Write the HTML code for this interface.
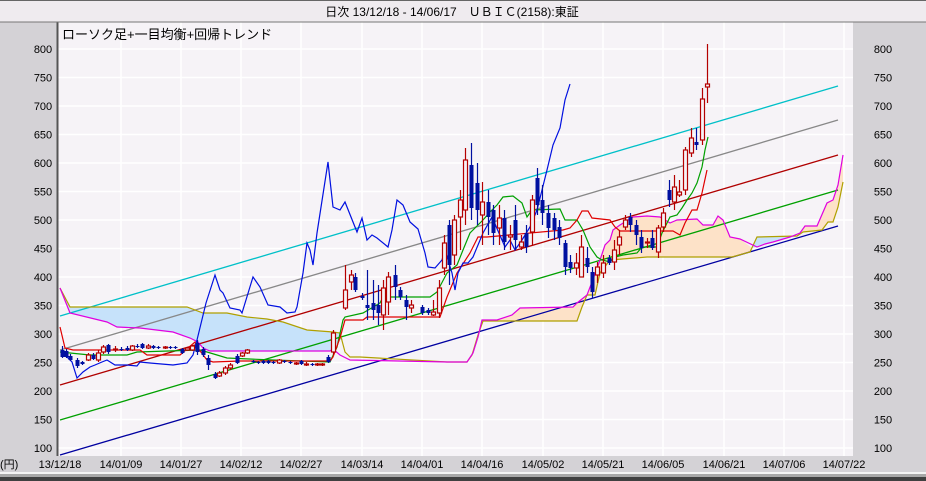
<!DOCTYPE html>
<html><head><meta charset="utf-8"><style>
html,body{margin:0;padding:0;width:926px;height:481px;overflow:hidden;background:#d4d2d6}
svg{display:block}
text{font-family:"Liberation Sans","Noto Sans CJK JP",sans-serif}
</style></head><body>
<svg id="s" width="926" height="481" viewBox="0 0 926 481" xmlns="http://www.w3.org/2000/svg">
<rect x="0" y="0" width="926" height="481" fill="#d4d2d6"/>
<rect x="58" y="22" width="795" height="434" fill="#f6f3f7"/>
<g stroke="#ffffff" stroke-width="1.5" fill="none">
<path d="M58 49H853M58 77.5H853M58 106H853M58 134.5H853M58 163H853M58 191.5H853M58 220H853M58 248.5H853M58 277H853M58 305.5H853M58 334H853M58 362.5H853M58 391H853M58 419.5H853M58 448H853"/>
<path d="M121 22V456M181 22V456M241 22V456M301 22V456M362 22V456M422 22V456M482 22V456M543 22V456M603 22V456M663 22V456M724 22V456M784 22V456M844 22V456"/>
</g>
<line x1="57.5" y1="22" x2="57.5" y2="456" stroke="#555" stroke-width="2"/>
<polygon fill="#c6e2fa" points="60,288 70,307 187,307 203,313 227,313 247,317 267,319 283,322 307,330 333,332 340,333 343,340 340,340 333,349 330,351 210,351 203,348 198,342 190,338 173,332 140,328 117,327 107,322 70,313"/>
<polygon fill="#fde2c8" points="467,362 473,353 478,337 482,320 497,320 512,315 520,308 573,307 577,303 587,295 592,282 600,260 605,245 610,240 613,230 620,225 633,217 647,216 660,217 670,223 677,220 697,219 703,225 713,225 718,216 723,220 730,237 740,239 752,248 750,252 732,257 650,257 647,257 610,260 600,273 595,295 587,295 582,307 577,321 483,321 478,335 472,355"/>
<polygon fill="#c6e2fa" points="752,248 757,237 797,236 790,237 773,242 765,244 757,247"/>
<polygon fill="#fde2c8" points="797,236 800,233 805,226 817,226 827,203 833,200 838,185 843,155 843,182 838,207 833,222 828,222 822,230 803,232"/>
<g stroke-width="1.3" fill="none">
<line x1="60" y1="316" x2="838" y2="86" stroke="#00c0c8"/>
<line x1="60" y1="350" x2="838" y2="120" stroke="#888888"/>
<line x1="60" y1="385" x2="838" y2="155" stroke="#b00000"/>
<line x1="60" y1="420" x2="838" y2="190" stroke="#00a000"/>
<line x1="60" y1="455" x2="838" y2="226" stroke="#0000a0"/>
</g>
<g fill="none" stroke-width="1.2">
<polyline stroke="#b0a000" points="60,288 70,307 187,307 203,313 227,313 247,317 267,319 283,322 307,330 333,332 340,333 345,352 350,357 360,357 447,362 467,362 472,355 478,335 483,321 577,321 582,307 587,295 595,295 600,273 610,260 647,257 732,257 750,252 757,237 797,236 803,232 822,230 828,222 833,222 838,207 843,182"/>
<polyline stroke="#e000e0" points="60,288 70,313 107,322 117,327 140,328 173,332 190,338 198,342 203,348 210,351 330,351 333,349 340,355 350,360 447,362 467,362 473,353 478,337 482,320 497,320 512,315 520,308 573,307 577,303 587,295 592,282 600,260 605,245 610,240 613,230 620,225 633,217 647,216 660,217 670,223 677,220 697,219 703,225 713,225 718,216 723,220 730,237 740,239 757,247 765,244 773,242 790,237 800,233 805,226 817,226 827,203 833,200 838,185 843,155"/>
<polyline stroke="#00a000" points="60,352 70,353 90,355 127,355 137,352 200,350 207,352 227,358 273,360 330,362 337,347 343,320 345,317 363,313 380,303 383,297 430,297 437,292 447,273 457,265 463,250 470,233 483,220 490,212 497,205 503,197 513,196 522,203 527,217 532,210 560,209 565,220 577,220 583,230 590,247 597,257 602,260 610,262 615,257 623,255 637,253 642,247 657,247 662,233 670,217 677,215 682,208 687,200 692,193 697,183 702,167 705,150 708,137"/>
<polyline stroke="#e00000" points="60,327 65,348 73,350 140,350 147,355 180,355 195,342 197,347 207,360 213,362 240,361 330,361 333,357 340,338 345,320 363,320 367,317 440,317 447,297 457,273 470,253 478,237 487,237 563,230 570,228 577,220 582,211 588,211 592,218 610,220 615,227 620,231 673,231 680,235 685,223 692,210 697,210 702,193 707,170"/>
<polyline stroke="#0010e0" points="62,352 72,362 77,378 83,372 90,367 95,365 102,362 107,360 115,365 127,365 137,366 140,362 150,363 173,365 187,363 193,355 197,340 206,303 215,275 220,290 223,293 230,308 240,310 242,313 253,277 260,287 268,305 280,307 287,313 295,312 297,307 303,273 307,243 310,250 313,265 317,233 328,162 333,207 340,210 345,202 357,232 362,218 367,240 372,235 377,238 388,247 392,230 397,200 403,205 410,222 418,229 425,253 428,267 435,268 442,260 445,250 452,273 455,290 458,273 463,263 468,263 473,257 483,233 492,217 505,247 510,240 515,250 522,240 530,227 537,210 547,170 553,145 560,128 565,100 570,84"/>
</g>
<g id="c"></g>
<rect x="0" y="0" width="926" height="22" fill="#efebef"/>
<line x1="0" y1="0.5" x2="926" y2="0.5" stroke="#666"/>
<line x1="0" y1="22" x2="926" y2="22" stroke="#777" stroke-width="1"/>
<text x="452" y="16" font-size="12" text-anchor="middle" fill="#000">日次 13/12/18 - 14/06/17　ＵＢＩＣ(2158):東証</text>
<text x="62" y="39" font-size="13" fill="#000">ローソク足+一目均衡+回帰トレンド</text>
<g font-size="11" fill="#000" text-anchor="middle">
<text x="43" y="53">800</text><text x="43" y="81.5">750</text><text x="43" y="110">700</text><text x="43" y="138.5">650</text><text x="43" y="167">600</text><text x="43" y="195.5">550</text><text x="43" y="224">500</text><text x="43" y="252.5">450</text><text x="43" y="281">400</text><text x="43" y="309.5">350</text><text x="43" y="338">300</text><text x="43" y="366.5">250</text><text x="43" y="395">200</text><text x="43" y="423.5">150</text><text x="43" y="452">100</text>
<text x="883" y="53">800</text><text x="883" y="81.5">750</text><text x="883" y="110">700</text><text x="883" y="138.5">650</text><text x="883" y="167">600</text><text x="883" y="195.5">550</text><text x="883" y="224">500</text><text x="883" y="252.5">450</text><text x="883" y="281">400</text><text x="883" y="309.5">350</text><text x="883" y="338">300</text><text x="883" y="366.5">250</text><text x="883" y="395">200</text><text x="883" y="423.5">150</text><text x="883" y="452">100</text>
<text x="60" y="468">13/12/18</text><text x="121" y="468">14/01/09</text><text x="181" y="468">14/01/27</text><text x="241" y="468">14/02/12</text><text x="301" y="468">14/02/27</text><text x="362" y="468">14/03/14</text><text x="422" y="468">14/04/01</text><text x="482" y="468">14/04/16</text><text x="543" y="468">14/05/02</text><text x="603" y="468">14/05/21</text><text x="663" y="468">14/06/05</text><text x="724" y="468">14/06/21</text><text x="784" y="468">14/07/06</text><text x="844" y="468">14/07/22</text>
</g>
<text x="0" y="468" font-size="11" fill="#000">(円)</text>
<rect x="0" y="472" width="926" height="2" fill="#f4f4f4"/>
<rect x="0" y="474" width="926" height="3" fill="#a8a8a8"/>
<rect x="0" y="477" width="926" height="4" fill="#404040"/>
</svg>
<script>
var d=[[62,350,357,346,358,'b'],[66,351,357,349,358,'b'],[70,356,360,354,361,'b'],[77,360,366,358,368,'b'],[82,362,364,361,365,'b'],[88,355,360,353,361,'r'],[93,355,359,353,360,'b'],[98,353,360,350,362,'r'],[103,347,352,345,354,'r'],[108,345,352,344,354,'b'],[115,349,350,346,352,'r'],[121,349,350,347,351,'b'],[127,348,350,346,351,'b'],[132,346,350,345,351,'r'],[137,346,347,344,348,'b'],[142,344,348,343,349,'b'],[148,346,348,344,349,'r'],[153,346,348,345,349,'b'],[158,347,348,346,349,'b'],[165,347,348,346,349,'r'],[170,347,348,346,349,'b'],[175,347,348,346,349,'b'],[182,349,353,348,354,'b'],[187,348,350,347,351,'r'],[192,346,350,345,351,'r'],[197,343,352,340,355,'b'],[203,349,355,347,357,'b'],[208,358,365,355,370,'b'],[215,374,378,372,379,'b'],[219,373,376,371,377,'r'],[225,368,373,366,375,'r'],[230,365,368,363,370,'r'],[237,356,363,354,364,'b'],[242,353,356,352,357,'r'],[247,350,353,349,354,'r'],[253,361,362,360,363,'b'],[258,362,363,361,364,'b'],[263,361,363,360,364,'b'],[268,361,363,360,364,'b'],[273,362,363,361,364,'b'],[279,360,363,359,364,'r'],[284,361,362,360,363,'b'],[290,362,363,361,364,'b'],[296,363,364,362,365,'r'],[301,361,364,360,365,'b'],[306,364,365,362,366,'r'],[312,364,365,363,366,'b'],[317,364,365,363,366,'r'],[322,364,365,363,366,'r'],[328,357,362,355,363,'b'],[333,333,352,330,355,'r'],
[345,290,308,265,310,'r'],[351,275,282,270,290,'r'],[355,277,290,273,292,'b'],[362,296,298,293,300,'b'],[367,305,308,270,320,'b'],[373,303,310,280,320,'b'],[378,305,313,285,325,'b'],[383,288,315,280,330,'r'],[388,277,302,272,315,'r'],[395,275,287,265,300,'b'],[400,290,297,287,300,'b'],[406,300,307,295,320,'b'],[411,305,308,300,313,'r'],[422,307,313,305,315,'b'],[428,310,313,308,315,'b'],[433,312,315,300,316,'r'],[439,288,313,280,318,'r'],[444,243,268,235,275,'r'],[449,225,265,220,285,'b'],[454,220,255,215,265,'r'],[460,200,217,190,250,'r'],[465,160,210,148,225,'r'],[471,165,208,143,220,'b'],[477,183,210,163,225,'b'],[482,202,215,182,245,'r'],[488,202,217,190,235,'b'],[493,210,233,205,245,'b'],[499,218,228,205,245,'r'],[504,218,242,210,250,'b'],[510,235,237,225,250,'r'],[515,220,240,205,250,'b'],[521,242,247,235,250,'r'],[526,233,247,225,253,'b'],[532,200,232,195,245,'r'],[537,178,205,168,215,'b'],[542,200,213,185,225,'b'],[548,213,228,205,238,'b'],[554,218,230,213,240,'b'],[559,227,238,220,245,'b'],[565,243,267,240,275,'b'],[570,262,268,255,273,'b'],[576,263,268,253,275,'r'],[581,247,277,235,277,'r'],[587,258,267,247,273,'b'],[592,272,292,267,298,'b'],[597,267,275,262,283,'r'],[603,263,273,255,278,'r'],[609,258,263,255,265,'b'],[614,250,262,240,270,'r'],[619,237,245,230,255,'r'],[625,220,227,215,230,'r'],[630,217,225,213,232,'b'],[636,225,235,220,245,'b'],[641,237,248,230,253,'b'],[647,242,243,238,248,'r'],[652,238,248,230,250,'b'],[658,228,252,225,258,'r'],[663,213,227,208,232,'r'],[669,190,200,180,207,'b'],[674,187,202,175,210,'r'],[679,192,195,180,197,'r'],[685,150,190,147,195,'r'],[691,138,153,128,157,'r'],[696,142,145,128,150,'b'],[702,99,140,88,145,'r'],[707,84,87,44,103,'r']];
var g=document.getElementById('c'),h='';
d.forEach(function(a){var x=a[0],col=a[5]=='r'?'#b40000':'#0010a0';
h+='<line x1="'+(x+.5)+'" y1="'+a[3]+'" x2="'+(x+.5)+'" y2="'+a[4]+'" stroke="'+col+'" stroke-width="1.2"/>';
var hh=Math.max(1,a[2]-a[1]);
if(a[5]=='r')h+='<rect x="'+(x-1.5)+'" y="'+a[1]+'" width="4" height="'+hh+'" fill="#f6f3f7" stroke="'+col+'" stroke-width="1.2"/>';
else h+='<rect x="'+(x-1.5)+'" y="'+a[1]+'" width="4" height="'+hh+'" fill="'+col+'"/>';});
g.innerHTML=h;
</script>
</body></html>
